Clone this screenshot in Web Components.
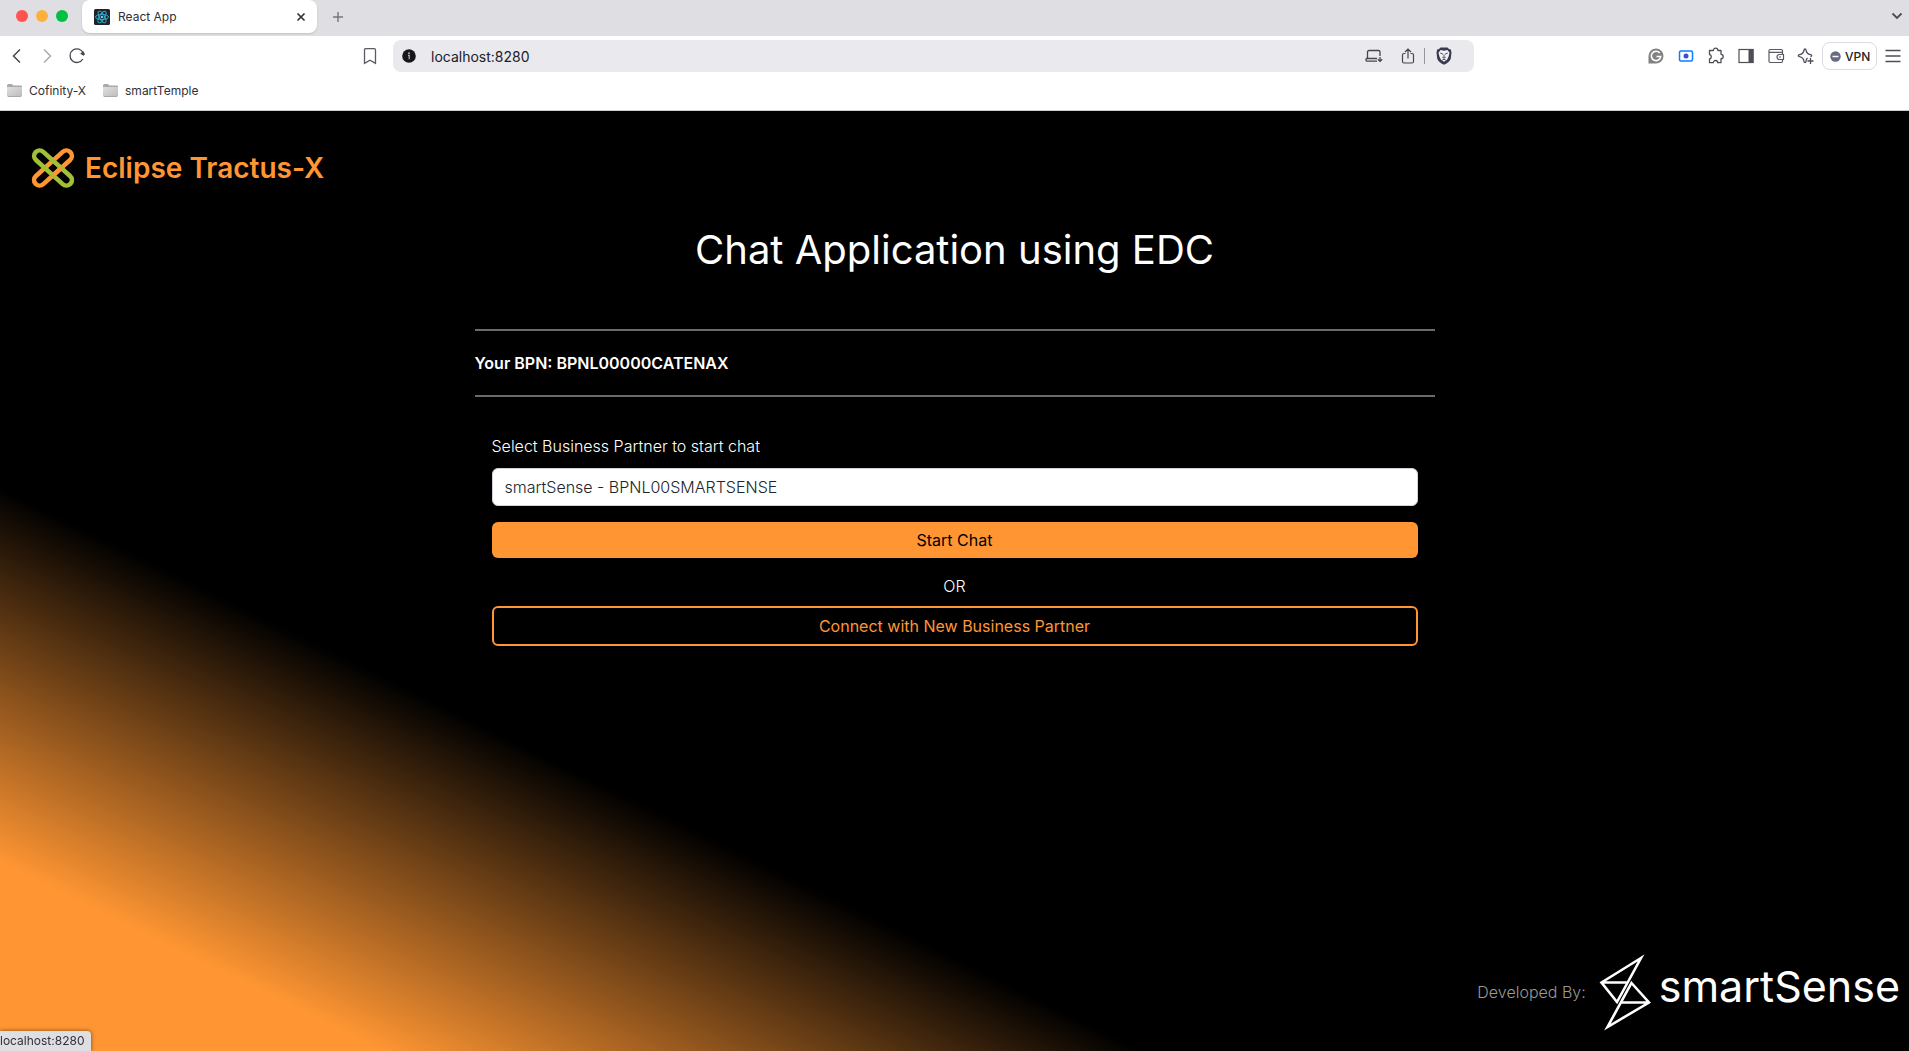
<!DOCTYPE html>
<html lang="en"><head><meta charset="utf-8"><title>React App</title>
<style>
html,body{height:100%;margin:0}
body{font-family:Inter,"Liberation Sans",sans-serif}
</style></head><body>
<app-window></app-window>
<script>
const define=(name,html)=>customElements.define(name,class extends HTMLElement{
  constructor(){super();this.attachShadow({mode:'open'}).innerHTML='<style>*{box-sizing:border-box}button{font:inherit;color:inherit;border:0;background:none;padding:0;margin:0}svg{display:block}</style>'+html;}
});

define('tab-strip',`<style>
:host{display:flex;height:36px;background:#dfdee3;align-items:flex-start;padding:0 5px 0 16px}
.lights{display:flex;gap:8px;margin:10px 14px 0 0}
.lights button{width:12px;height:12px;border-radius:50%}
.r{background:#fe5350}.y{background:#fdb03c}.g{background:#00c041}
.tab{display:flex;align-items:center;width:235px;height:33px;background:#fff;border-radius:8px;padding:0 9px 0 12px;font-size:12px;color:#303038;box-shadow:0 1px 2px #0002}
.tab svg{flex:none}
.tab span{flex:1;margin-left:8px}
.plus{margin:11px 0 0 15px}.down{margin:11px 0 0 auto}
</style>
<div class="lights"><button class="r" aria-label="Close window"></button><button class="y" aria-label="Minimize"></button><button class="g" aria-label="Zoom"></button></div>
<div class="tab"><svg width="16" height="16" viewBox="0 0 16 16"><rect width="16" height="16" rx="1.5" fill="#20232a"/><g fill="none" stroke="#2fb4d4" stroke-width=".9"><ellipse cx="8" cy="8" rx="6.500" ry="2.600"/><ellipse cx="8" cy="8" rx="6.500" ry="2.600" transform="rotate(60 8 8)"/><ellipse cx="8" cy="8" rx="6.500" ry="2.600" transform="rotate(120 8 8)"/></g><circle cx="8" cy="8" r="1.300" fill="#5ed6f0"/></svg><span>React App</span>
<button aria-label="Close tab"><svg width="14" height="14" viewBox="0 0 14 14"><path d="M3.500 3.500l7 7M10.500 3.500l-7 7" stroke="#333" stroke-width="1.700"/></svg></button></div>
<button class="plus" aria-label="New tab"><svg width="12" height="12" viewBox="0 0 12 12"><path d="M6 1v10M1 6h10" stroke="#75757d" stroke-width="1.400"/></svg></button>
<button class="down" aria-label="Search tabs"><svg width="14" height="10" viewBox="0 0 14 10"><path d="M2.500 2.500L7 7l4.500-4.500" fill="none" stroke="#4b4b54" stroke-width="1.800"/></svg></button>`);

define('address-bar',`<style>
:host{display:flex;align-items:center;flex:0 1 1081px;height:32px;background:#eae9ee;border-radius:8px;padding:0 22px 0 9px}
input{flex:1;min-width:0;border:0;outline:0;background:none;font:14px Inter,sans-serif;color:#202027;padding:0;margin-left:15px}
.actions{display:flex;align-items:center}
.share{margin:0 9px 0 18px}i{width:1px;height:16px;background:#96969e;margin-right:11px}
</style>
<svg width="14" height="14" viewBox="0 0 14 14"><circle cx="7" cy="7" r="6.800" fill="#17171b"/><circle cx="7" cy="4.200" r=".9" fill="#bbb"/><path d="M6 6.300h1.200v3.900" stroke="#bbb" stroke-width="1.200" fill="none"/></svg>
<input aria-label="Address" value="localhost:8280">
<div class="actions"><button aria-label="Install"><svg width="18" height="14" viewBox="0 0 18 14" fill="none" stroke="#46464f" stroke-width="1.300"><path d="M2.500 9V3q0-1.500 1.500-1.500h9.500q1.500 0 1.500 1.500v4M1 9.500h11M1 9.500v1.500q0 1.200 1.200 1.200H12M15 8v4M12.800 10.200L15 12.400l2.200-2.200"/></svg></button>
<button class="share" aria-label="Share"><svg width="14" height="16" viewBox="0 0 14 16" fill="none" stroke="#46464f" stroke-width="1.200"><path d="M4.500 5.500H3Q1.500 5.500 1.500 7v6.500Q1.500 15 3 15h8q1.500 0 1.500-1.500V7q0-1.500-1.500-1.500H9.500M7 10.500V1.500M4 4l3-3 3 3"/></svg></button><i></i>
<button aria-label="Shields"><svg width="16" height="18" viewBox="0 0 16 18"><path d="M4.500.5h7l1.500 1.500 1.800.4.7 3-.8 6.500Q13.500 15 8 17.700 2.500 15 1.300 11.900L.5 5.400l.7-3L3 2z" fill="#383850"/><path d="M4.500 2.900L8 3.700l3.500-.8 2 2.900-1 4-1.500 2.900-3 2-3-2-1.500-2.900-1-4z" fill="#f2f1f5"/><path d="M4.200 6l2.800 1.200M11.800 6L9 7.200M6.300 10.200L8 11.200l1.700-1M8 7.500v3M6.300 13l1.700-.8 1.700.8" stroke="#383850" stroke-width=".9" fill="none"/></svg></button></div>`);

define('tool-bar',`<style>
:host{display:flex;height:40px;align-items:center;padding:0 8px;background:#fff}
.nav{display:flex;gap:12px;flex:0 1 385px}
.nav button:last-child{margin-left:auto;margin-right:14px}
.ext{display:flex;align-items:center;gap:12px;margin-left:auto}
.vpn{display:flex;align-items:center;gap:4px;height:28px;width:55px;border:1px solid #dcdbe1;border-radius:8px;padding:0 0 0 7px;font-size:12px;font-weight:500;color:#222;margin:0 -4px 0 -5px}
</style>
<div class="nav">
<button aria-label="Back"><svg width="18" height="18" viewBox="0 0 18 18"><path d="M12 2.500L5.500 9l6.500 6.500" fill="none" stroke="#46464f" stroke-width="1.500"/></svg></button>
<button aria-label="Forward"><svg width="18" height="18" viewBox="0 0 18 18"><path d="M6 2.500L12.500 9 6 15.500" fill="none" stroke="#ababaf" stroke-width="1.500"/></svg></button>
<button aria-label="Reload"><svg width="18" height="18" viewBox="0 0 18 18"><path d="M15.200 6.200A6.800 6.800 0 1 0 14.800 12" fill="none" stroke="#46464f" stroke-width="1.300"/><path d="M12.200 6.800l3-2.800 1.800 3.300-1.500 1.400z" fill="#46464f"/></svg></button>
<button aria-label="Bookmark"><svg width="18" height="18" viewBox="0 0 18 18"><path d="M3.500 3q0-1.300 1.300-1.300h8.400q1.300 0 1.300 1.300v13.300L9 13.200l-5.500 3.100z" fill="none" stroke="#5a5a63" stroke-width="1.300"/></svg></button>
</div>
<address-bar></address-bar>
<div class="ext">
<button aria-label="Grammar"><svg width="18" height="18" viewBox="0 0 18 18"><path d="M1.500 9A7.500 7.500 0 1 1 9 16.500H1.500z" fill="#828282"/><path d="M12.700 6A4.700 4.700 0 1 0 13.700 9.500H9.500" fill="none" stroke="#fff" stroke-width="1.600"/></svg></button>
<button aria-label="Recorder"><svg width="18" height="18" viewBox="0 0 18 18"><rect x="2.500" y="4" width="13" height="10" rx="1.500" fill="#fff" stroke="#0a7cff" stroke-width="1.500"/><circle cx="9" cy="9" r="2.500" fill="#3d4bd5"/></svg></button>
<button aria-label="Extensions"><svg width="18" height="18" viewBox="0 0 18 18"><path d="M2.500 3.500H6.300a2.300 2.300 0 0 1 4.600 0H14V7.300a2.200 2.200 0 0 1 0 4.400v4h-3.300a2.200 2.200 0 0 0-4.400 0H2.500V12a2.300 2.300 0 0 0 0-4.500z" fill="none" stroke="#4e4e57" stroke-width="1.300" stroke-linejoin="round"/></svg></button>
<button aria-label="Sidebar"><svg width="18" height="18" viewBox="0 0 18 18"><rect x="2" y="2.500" width="14" height="13" fill="none" stroke="#4e4e57" stroke-width="1.200"/><path d="M11.500 2h5v14h-5z" fill="#4e4e57"/></svg></button>
<button aria-label="Wallet"><svg width="18" height="18" viewBox="0 0 18 18" fill="none" stroke="#5a5a63" stroke-width="1.200"><path d="M15.500 5.300V3.700q0-1.200-1.200-1.200H3.200Q2 2.500 2 3.700v10.600q0 1.200 1.200 1.200h11.100q1.200 0 1.200-1.200v-1.800M2 5.300h13.500v2"/><path d="M16.500 7.500h-4a2.500 2.500 0 0 0 0 5h4zM12 10h2"/></svg></button>
<button aria-label="Assistant"><svg width="18" height="18" viewBox="0 0 18 18"><path d="M8 2q.8 0 1 1.200Q9.700 7 13.500 7.700q1.200.2 1.200 1t-1.200 1M8 2q-.8 0-1 1.200Q6.300 7 2.500 7.700q-1.200.3-1.200 1t1.200 1Q6.300 10.500 7 14.300q.2 1.200 1 1.200t1-1.200q.2-2.300 1.500-3.300M13.500 11v6M10.500 14h6" fill="none" stroke="#4e4e57" stroke-width="1.300"/></svg></button>
<button class="vpn"><svg width="11" height="11" viewBox="0 0 11 11"><circle cx="5.500" cy="5.500" r="5.200" fill="#686a82"/><path d="M2.500 5.500h6" stroke="#fff" stroke-width="1.500"/></svg>VPN</button>
<button aria-label="Menu"><svg width="16" height="18" viewBox="0 0 16 18"><path d="M.5 3.500h15M.5 9h15M.5 14.500h15" stroke="#4e4e57" stroke-width="1.300"/></svg></button>
</div>`);

define('bookmark-link',`<style>
a{display:flex;align-items:center;gap:6px;color:#303038;text-decoration:none;font-size:12px}
</style><a href="#"><svg width="17" height="15" viewBox="0 0 17 15"><defs><linearGradient id="f" x2="1" y2="1"><stop stop-color="#e0e0e0"/><stop offset="1" stop-color="#bdbdbd"/></linearGradient></defs><path d="M1 3q0-2 1.500-2H6l1.200 1.500H15q1 0 1 1V12q0 2-2 2H3q-2 0-2-2z" fill="#a9a9a9"/><path d="M1 4h15v7.500q0 1.500-2 1.500H3q-2 0-2-1.500z" fill="url(#f)"/></svg><slot></slot></a>`);

define('eclipse-brand',`<style>
:host{display:flex;align-items:center;gap:9px;color:#ff9633;font-size:28px;line-height:42px;font-weight:600}
</style><svg width="46" height="42" viewBox="0 0 46 42" fill="none" stroke-width="4.600"><rect x="-.5" y="15.500" width="47" height="11" rx="5.500" stroke="#ff9633" transform="rotate(-42 23 21)"/><rect x="-.5" y="15.500" width="47" height="11" rx="5.500" stroke="#a1c037" transform="rotate(42 23 21)"/><path d="M23.300 28.100l8.200-7.400" stroke="#ff9633"/></svg><span>Eclipse Tractus-X</span>`);

define('partner-form',`<style>
:host{display:block;padding:0 17px;font-size:16px;line-height:24px}
form{display:flex;flex-direction:column}
label{color:#fff;font-weight:300;margin-bottom:10px}
select{appearance:none;width:100%;height:38px;border:1px solid #ced4da;border-radius:6px;background:#fff;color:#212529;font:300 16px/24px Inter,sans-serif;padding:0 12px;margin-bottom:16px}
button{border-radius:6px;width:100%}
.start{height:36px;background:#ff9633;color:#000;margin-bottom:16px}
.or{text-align:center;color:#fff;font-weight:300;margin-bottom:8px}
.new{height:40px;border:2px solid #ff9633;color:#ff9633}
</style><form><label for="partner">Select Business Partner to start chat</label>
<select id="partner"><option>smartSense - BPNL00SMARTSENSE</option></select>
<button type="button" class="start">Start Chat</button><div class="or">OR</div>
<button type="button" class="new">Connect with New Business Partner</button></form>`);

define('developer-credit',`<style>
:host{display:flex;align-items:center;justify-content:flex-end;color:#999;font-size:16px;font-weight:300;padding:0 9px 20px}
svg{margin:0 8px 0 12px}.name{color:#fff;font-size:43px;line-height:60px;font-weight:400;padding-bottom:12px}
</style><span>Developed By:</span><svg width="53" height="78" viewBox="0 0 53 78" fill="none" stroke="#fff" stroke-width="2.600"><path d="M43 5L3.500 29.500 19 49zM3.500 29.500H30M33.500 30L51 49.500 9.500 74zM51 49.500H23"/></svg><span class="name">smartSense</span>`);

define('chat-page',`<style>
:host{flex:1;display:flex;flex-direction:column;color:#fff;background:linear-gradient(to right top,#ff9633 0%,#ff9633 10%,#000 30%)}
header{padding:36px 30px 0}
main{width:960px;max-width:100%;margin:31px auto 0}
h1{font-size:40px;font-weight:400;line-height:60px;text-align:center;margin:0 0 49px}
.bpn{border:solid #6a6a6d;border-width:2px 0;height:68px;display:flex;align-items:center;font-size:16px;font-weight:600;margin-bottom:37px}
footer{margin-top:auto}
</style><header><eclipse-brand></eclipse-brand></header><main><h1>Chat Application using EDC</h1><div class="bpn">Your BPN: BPNL00000CATENAX</div><partner-form></partner-form></main><footer><developer-credit></developer-credit></footer>`);

define('app-window',`<style>
:host{display:flex;flex-direction:column;min-height:100vh}
nav{display:flex;gap:16px;height:35px;padding:0 6px 5px;align-items:center;background:#fff;border-bottom:1px solid #ccc}
.status{position:fixed;left:0;bottom:0;height:20px;padding:0 7px 0 0;background:#dfdee3;border-radius:0 4px 0 0;font-size:12px;line-height:19px;color:#303038;box-shadow:0 0 4px #0008}
</style><tab-strip></tab-strip><tool-bar></tool-bar><nav><bookmark-link>Cofinity-X</bookmark-link><bookmark-link>smartTemple</bookmark-link></nav><chat-page></chat-page><div class="status">localhost:8280</div>`);
</script></body></html>
